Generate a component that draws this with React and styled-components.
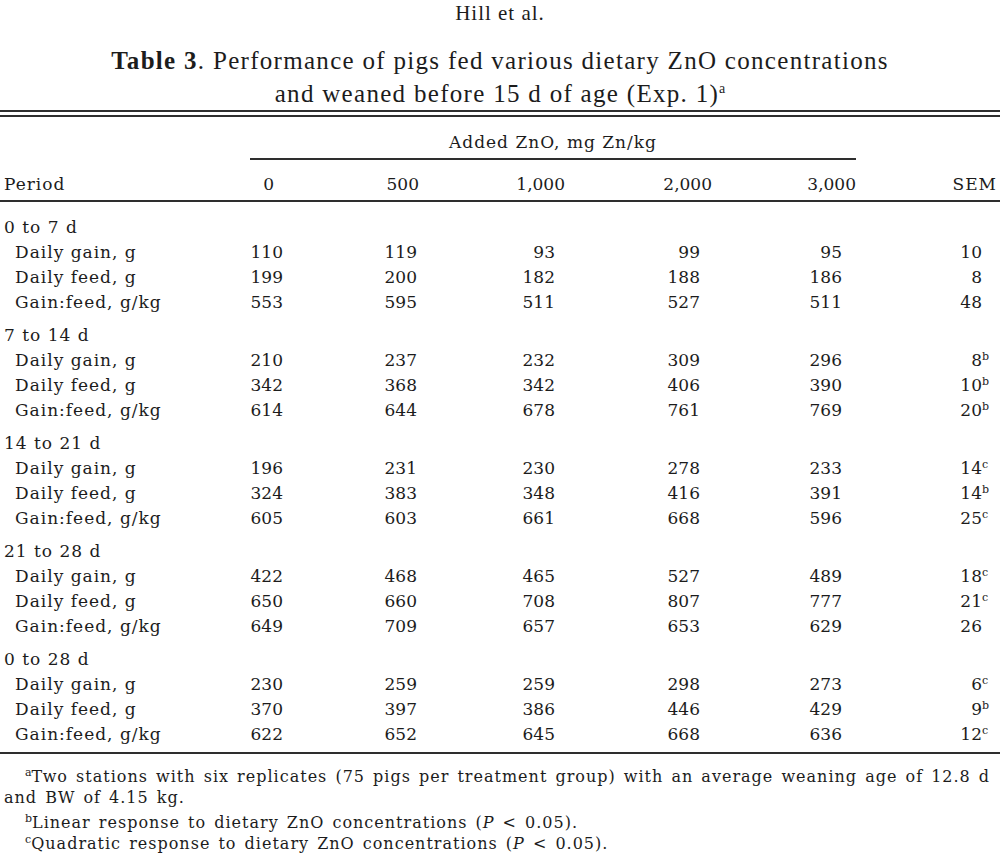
import styled, { createGlobalStyle } from 'styled-components';

const GlobalStyle = createGlobalStyle`
  html, body {
    margin: 0;
    padding: 0;
    background: #ffffff;
  }
  body {
    color: #1c1c1c;
    font-family: "DejaVu Serif", "Liberation Serif", serif;
  }
`;

const Page = styled.div`
  width: 1000px;
  padding-top: 2px;
`;

const RunningHead = styled.div`
  font-family: "Liberation Serif", serif;
  font-size: 21px;
  line-height: 23px;
  letter-spacing: 1px;
  text-align: center;
`;

const Caption = styled.h1`
  margin: 19px 0 0;
  font-family: "Liberation Serif", serif;
  font-weight: normal;
  font-size: 25px;
  line-height: 33px;
  letter-spacing: 1.3px;
  text-align: center;

  b {
    font-weight: bold;
  }
`;

const Sup = styled.sup`
  font-size: ${(p) => p.$size ?? 11}px;
  line-height: 0;
  letter-spacing: 0;
  vertical-align: ${(p) => p.$raise ?? 6}px;
`;

const Table = styled.div`
  display: grid;
  grid-template-columns: 250px 40px 135px 140px 147px 144px 1fr;
  font-size: 17px;
  line-height: 25px;
`;

const Rule = styled.div`
  grid-column: ${(p) => p.$span || '1 / -1'};
  height: ${(p) => (p.$double ? '3px' : '0')};
  border-top: 2px solid #2e2e2e;
  border-bottom: ${(p) => (p.$double ? '2px solid #2e2e2e' : 'none')};
  margin-top: ${(p) => p.$mt ?? 0}px;
  margin-bottom: ${(p) => p.$mb ?? 0}px;
`;

const Spanner = styled.div`
  grid-column: 2 / 7;
  text-align: center;
  letter-spacing: 1px;
  margin-top: 13px;
`;

const Blank = styled.div``;

const LabelCell = styled.div`
  grid-column: 1;
  padding-left: ${(p) => (p.$sub ? 15 : 4)}px;
  letter-spacing: 1px;
  white-space: nowrap;
  margin-top: ${(p) => p.$mt ?? 0}px;
`;

const GroupFill = styled.div`
  grid-column: 2 / -1;
  margin-top: ${(p) => p.$mt ?? 0}px;
`;

const HeadCell = styled.div`
  text-align: right;
  padding-right: ${(p) => p.$pad}px;
  letter-spacing: ${(p) => (p.$word ? 1 : 0)}px;
  white-space: nowrap;
`;

const NumCell = styled.div`
  display: flex;
  justify-content: flex-end;
  padding-right: ${(p) => p.$pad}px;
  white-space: nowrap;
`;

const NoteSlot = styled.span`
  display: inline-block;
  width: 8px;
  text-align: left;
`;

const Notes = styled.div`
  margin-top: 12px;
  font-size: 16px;
  line-height: 21px;
  letter-spacing: 1px;
  word-spacing: 2px;
`;

const Note = styled.p`
  margin: 0 0 ${(p) => p.$mb ?? 0}px;
  padding-left: 4px;
  text-indent: 21px;
`;

const Line = styled.span`
  white-space: nowrap;
`;

const columns = [
  { head: '0', hp: 16, vp: 7 },
  { head: '500', hp: 6, vp: 8 },
  { head: '1,000', hp: 0, vp: 10 },
  { head: '2,000', hp: 0, vp: 12 },
  { head: '3,000', hp: 0, vp: 14 },
];

const groups = [
  {
    period: '0 to 7 d',
    rows: [
      ['Daily gain, g', [110, 119, 93, 99, 95], '10', ''],
      ['Daily feed, g', [199, 200, 182, 188, 186], '8', ''],
      ['Gain:feed, g/kg', [553, 595, 511, 527, 511], '48', ''],
    ],
  },
  {
    period: '7 to 14 d',
    rows: [
      ['Daily gain, g', [210, 237, 232, 309, 296], '8', 'b'],
      ['Daily feed, g', [342, 368, 342, 406, 390], '10', 'b'],
      ['Gain:feed, g/kg', [614, 644, 678, 761, 769], '20', 'b'],
    ],
  },
  {
    period: '14 to 21 d',
    rows: [
      ['Daily gain, g', [196, 231, 230, 278, 233], '14', 'c'],
      ['Daily feed, g', [324, 383, 348, 416, 391], '14', 'b'],
      ['Gain:feed, g/kg', [605, 603, 661, 668, 596], '25', 'c'],
    ],
  },
  {
    period: '21 to 28 d',
    rows: [
      ['Daily gain, g', [422, 468, 465, 527, 489], '18', 'c'],
      ['Daily feed, g', [650, 660, 708, 807, 777], '21', 'c'],
      ['Gain:feed, g/kg', [649, 709, 657, 653, 629], '26', ''],
    ],
  },
  {
    period: '0 to 28 d',
    rows: [
      ['Daily gain, g', [230, 259, 259, 298, 273], '6', 'c'],
      ['Daily feed, g', [370, 397, 386, 446, 429], '9', 'b'],
      ['Gain:feed, g/kg', [622, 652, 645, 668, 636], '12', 'c'],
    ],
  },
];

const App = () => {
  return (
    <Page>
      <GlobalStyle />
      <RunningHead>Hill et al.</RunningHead>
      <Caption>
        <b>Table 3</b>. Performance of pigs fed various dietary ZnO concentrations
        <br />
        and weaned before 15 d of age (Exp. 1)<Sup $size={14} $raise={9}>a</Sup>
      </Caption>

      <Table>
        <Rule $double />
        <Blank />
        <Spanner>Added ZnO, mg Zn/kg</Spanner>
        <Rule $span="2 / 7" $mt={3} $mb={12} />

        <LabelCell>Period</LabelCell>
        {columns.map((c) => (
          <HeadCell key={c.head} $pad={c.hp}>{c.head}</HeadCell>
        ))}
        <HeadCell $pad={3} $word>SEM</HeadCell>
        <Rule $mt={3} $mb={13} />

        {groups.map((g, gi) => (
          <>
            <LabelCell key={g.period} $mt={gi === 0 ? 0 : 8}>{g.period}</LabelCell>
            <GroupFill $mt={gi === 0 ? 0 : 8} />
            {g.rows.map(([label, vals, sem, note]) => (
              <>
                <LabelCell $sub>{label}</LabelCell>
                {vals.map((v, i) => (
                  <NumCell key={i} $pad={columns[i].vp}>{v}</NumCell>
                ))}
                <NumCell $pad={10}>
                  {sem}
                  <NoteSlot>{note && <Sup>{note}</Sup>}</NoteSlot>
                </NumCell>
              </>
            ))}
          </>
        ))}
        <Rule $mt={5} />
      </Table>

      <Notes>
        <Note $mb={4}>
          <Line><Sup>a</Sup>Two stations with six replicates (75 pigs per treatment group) with an average weaning age of 12.8 d</Line>
          <br />
          and BW of 4.15 kg.
        </Note>
        <Note>
          <Sup>b</Sup>Linear response to dietary ZnO concentrations (<i>P</i> &lt; 0.05).
        </Note>
        <Note>
          <Sup>c</Sup>Quadratic response to dietary ZnO concentrations (<i>P</i> &lt; 0.05).
        </Note>
      </Notes>
    </Page>
  );
};

export default App;
